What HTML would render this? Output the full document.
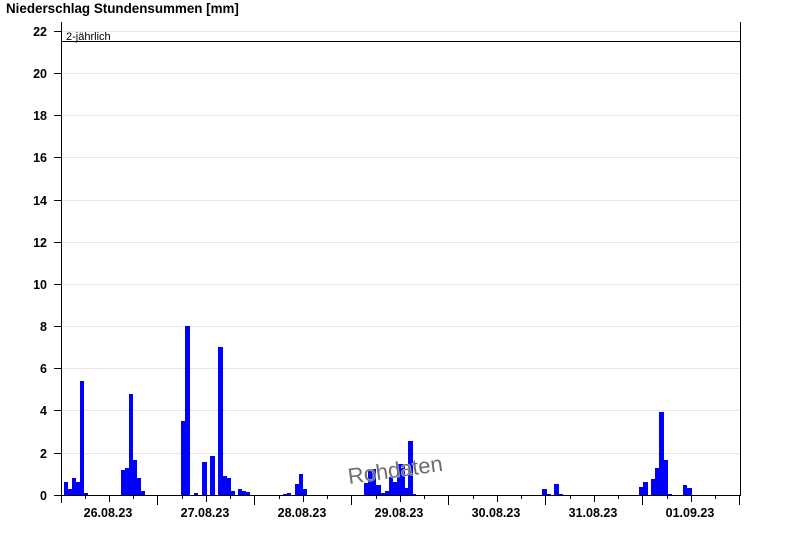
<!DOCTYPE html>
<html><head><meta charset="utf-8"><style>
html,body{margin:0;padding:0;background:#fff;width:800px;height:550px;overflow:hidden}
svg text{font-family:"Liberation Sans",Arial,sans-serif}
</style></head><body>
<svg width="800" height="550" viewBox="0 0 800 550" xmlns="http://www.w3.org/2000/svg">
<text x="6" y="13" font-size="13.4" font-weight="bold" fill="#000">Niederschlag Stundensummen [mm]</text>
<g stroke="#e6e6e6" stroke-width="1">
<line x1="62" x2="740" y1="31.5" y2="31.5"/><line x1="62" x2="740" y1="73.5" y2="73.5"/><line x1="62" x2="740" y1="115.5" y2="115.5"/><line x1="62" x2="740" y1="157.5" y2="157.5"/><line x1="62" x2="740" y1="200.5" y2="200.5"/><line x1="62" x2="740" y1="242.5" y2="242.5"/><line x1="62" x2="740" y1="284.5" y2="284.5"/><line x1="62" x2="740" y1="326.5" y2="326.5"/><line x1="62" x2="740" y1="368.5" y2="368.5"/><line x1="62" x2="740" y1="410.5" y2="410.5"/><line x1="62" x2="740" y1="453.5" y2="453.5"/>
</g>
<g font-size="12.5" font-weight="bold" text-anchor="end" fill="#000">
<text x="47" y="36">22</text><text x="47" y="78">20</text><text x="47" y="120">18</text><text x="47" y="162">16</text><text x="47" y="205">14</text><text x="47" y="247">12</text><text x="47" y="289">10</text><text x="47" y="331">8</text><text x="47" y="373">6</text><text x="47" y="415">4</text><text x="47" y="458">2</text><text x="47" y="500">0</text>
</g>
<g stroke="#000" stroke-width="1">
<line x1="54" x2="61" y1="31.5" y2="31.5"/><line x1="54" x2="61" y1="73.5" y2="73.5"/><line x1="54" x2="61" y1="115.5" y2="115.5"/><line x1="54" x2="61" y1="157.5" y2="157.5"/><line x1="54" x2="61" y1="200.5" y2="200.5"/><line x1="54" x2="61" y1="242.5" y2="242.5"/><line x1="54" x2="61" y1="284.5" y2="284.5"/><line x1="54" x2="61" y1="326.5" y2="326.5"/><line x1="54" x2="61" y1="368.5" y2="368.5"/><line x1="54" x2="61" y1="410.5" y2="410.5"/><line x1="54" x2="61" y1="453.5" y2="453.5"/><line x1="54" x2="61" y1="495.5" y2="495.5"/>
</g>
<g fill="#0000ff">
<rect x="64" y="482" width="4" height="13"/><rect x="68" y="489" width="4" height="6"/><rect x="72" y="478" width="4" height="17"/><rect x="76" y="482" width="4" height="13"/><rect x="80" y="381" width="4" height="114"/><rect x="84" y="493" width="4" height="2"/>
<rect x="121" y="470" width="4" height="25"/><rect x="125" y="468" width="4" height="27"/><rect x="129" y="394" width="4" height="101"/><rect x="133" y="460" width="4" height="35"/><rect x="137" y="478" width="4" height="17"/><rect x="141" y="491" width="4" height="4"/>
<rect x="181" y="421" width="4" height="74"/><rect x="185" y="326" width="5" height="169"/><rect x="194" y="493" width="4" height="2"/><rect x="202" y="462" width="5" height="33"/><rect x="210" y="456" width="5" height="39"/><rect x="218" y="347" width="5" height="148"/><rect x="223" y="476" width="4" height="19"/><rect x="227" y="478" width="4" height="17"/><rect x="231" y="491" width="4" height="4"/><rect x="238" y="489" width="4" height="6"/><rect x="242" y="491" width="4" height="4"/><rect x="246" y="492" width="4" height="3"/>
<rect x="283" y="494" width="4" height="1"/><rect x="287" y="493" width="4" height="2"/><rect x="295" y="484" width="4" height="11"/><rect x="299" y="474" width="4" height="21"/><rect x="303" y="489" width="4" height="6"/>
<rect x="364" y="483" width="4" height="12"/><rect x="368" y="469" width="8" height="26"/><rect x="376" y="485" width="5" height="10"/><rect x="381" y="493" width="4" height="2"/><rect x="385" y="491" width="4" height="4"/><rect x="389" y="477" width="4" height="18"/><rect x="393" y="482" width="4" height="13"/><rect x="397" y="464" width="8" height="31"/><rect x="405" y="488" width="3" height="7"/><rect x="408" y="441" width="5" height="54"/><rect x="413" y="494" width="3" height="1"/>
<rect x="542" y="489" width="5" height="6"/><rect x="547" y="494" width="4" height="1"/><rect x="554" y="484" width="5" height="11"/><rect x="559" y="494" width="4" height="1"/>
<rect x="639" y="487" width="4" height="8"/><rect x="643" y="482" width="5" height="13"/><rect x="651" y="479" width="4" height="16"/><rect x="655" y="468" width="4" height="27"/><rect x="659" y="412" width="5" height="83"/><rect x="664" y="460" width="4" height="35"/><rect x="668" y="494" width="4" height="1"/><rect x="683" y="485" width="4" height="10"/><rect x="687" y="488" width="5" height="7"/>
</g>
<line x1="61" x2="740" y1="41.5" y2="41.5" stroke="#000"/>
<text x="66" y="40" font-size="11" fill="#000">2-jährlich</text>
<g stroke="#000" stroke-width="1">
<line x1="61.5" x2="61.5" y1="22" y2="503"/><line x1="740.5" x2="740.5" y1="22" y2="496"/><line x1="61" x2="741" y1="495.5" y2="495.5"/>
<line x1="109.5" x2="109.5" y1="495" y2="502"/><line x1="206.5" x2="206.5" y1="495" y2="502"/><line x1="303.5" x2="303.5" y1="495" y2="502"/><line x1="400.5" x2="400.5" y1="495" y2="502"/><line x1="497.5" x2="497.5" y1="495" y2="502"/><line x1="594.5" x2="594.5" y1="495" y2="502"/><line x1="691.5" x2="691.5" y1="495" y2="502"/>
<line x1="157.5" x2="157.5" y1="495" y2="505"/><line x1="254.5" x2="254.5" y1="495" y2="505"/><line x1="351.5" x2="351.5" y1="495" y2="505"/><line x1="448.5" x2="448.5" y1="495" y2="505"/><line x1="545.5" x2="545.5" y1="495" y2="505"/><line x1="642.5" x2="642.5" y1="495" y2="505"/><line x1="739.5" x2="739.5" y1="495" y2="505"/>
<line x1="85.5" x2="85.5" y1="495" y2="499"/><line x1="133.5" x2="133.5" y1="495" y2="499"/><line x1="182.5" x2="182.5" y1="495" y2="499"/><line x1="230.5" x2="230.5" y1="495" y2="499"/><line x1="279.5" x2="279.5" y1="495" y2="499"/><line x1="327.5" x2="327.5" y1="495" y2="499"/><line x1="376.5" x2="376.5" y1="495" y2="499"/><line x1="424.5" x2="424.5" y1="495" y2="499"/><line x1="473.5" x2="473.5" y1="495" y2="499"/><line x1="521.5" x2="521.5" y1="495" y2="499"/><line x1="570.5" x2="570.5" y1="495" y2="499"/><line x1="618.5" x2="618.5" y1="495" y2="499"/><line x1="667.5" x2="667.5" y1="495" y2="499"/><line x1="715.5" x2="715.5" y1="495" y2="499"/>
</g>
<g font-size="12.5" font-weight="bold" text-anchor="middle" fill="#000">
<text x="108" y="517">26.08.23</text><text x="205" y="517">27.08.23</text><text x="302" y="517">28.08.23</text><text x="399" y="517">29.08.23</text><text x="496" y="517">30.08.23</text><text x="593" y="517">31.08.23</text><text x="690" y="517">01.09.23</text>
</g>
<text x="349" y="484" font-size="22" fill="#6e6e6e" stroke="#ffffff" stroke-width="0.7" paint-order="stroke" transform="rotate(-8 349 484)">Rohdaten</text>
</svg>
</body></html>
